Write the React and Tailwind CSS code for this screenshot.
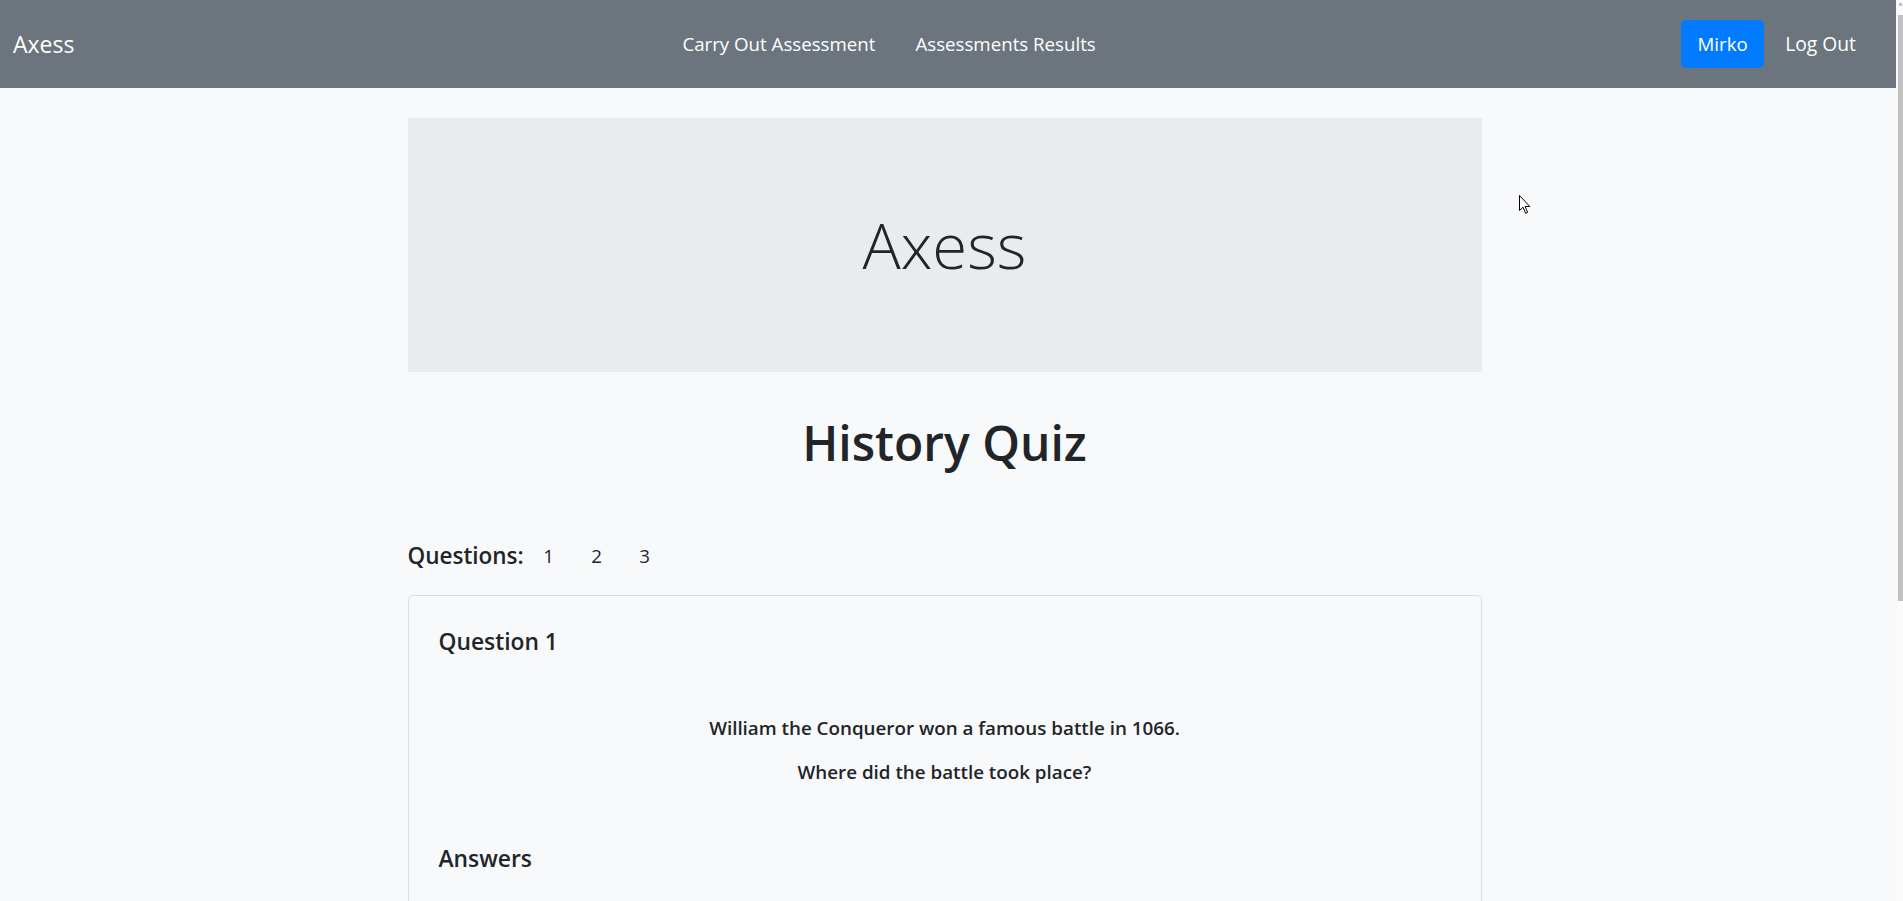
export default function App() {
  return (
    <div className="flex h-screen overflow-hidden bg-[#f8f9fa] font-['Open_Sans',sans-serif] text-[#212529]">
      <div className="relative min-w-0 flex-1">
        <nav className="flex h-[88px] items-center bg-[#6c757d] pl-[13px] pr-[40px] text-white">
          <a className="text-[23px] leading-none">Axess</a>
          <div className="ml-[608px] flex gap-[40px] text-[18.7px]">
            <a>Carry Out Assessment</a>
            <a>Assessments Results</a>
          </div>
          <div className="ml-auto flex items-center">
            <button className="flex h-[48px] w-[83px] items-center justify-center rounded-[5px] bg-[#007bff] text-[18.7px] text-white">
              Mirko
            </button>
            <a className="ml-[21px] text-[19.3px]">Log Out</a>
          </div>
        </nav>

        <div className="pr-[7px]">
          <main className="mx-auto w-[1074px] pt-[30px] pb-[40px]">
            <div className="flex h-[254px] items-center justify-center bg-[#e9ecef]">
              <h1 className="text-[63.5px] font-light leading-none">Axess</h1>
            </div>

            <h1 className="mt-[41px] h-[60px] text-center text-[48px] font-semibold leading-[60px]">
              History Quiz
            </h1>

            <div className="mt-[63px] flex h-[40px] items-center">
              <h5 className="w-[117px] text-[22.5px] font-semibold">Questions:</h5>
              <a className="w-[48px] text-center text-[18.7px]">1</a>
              <a className="w-[48px] text-center text-[18.7px]">2</a>
              <a className="w-[48px] text-center text-[18.7px]">3</a>
            </div>

            <div className="mt-[19px] h-[714px] rounded-[5px] border border-[#dcdee0] px-[30px] pt-[26px]">
              <h4 className="h-[40px] text-[22.8px] font-semibold leading-[40px]">Question 1</h4>
              <p className="mt-[51px] h-[31px] text-center text-[18.8px] font-semibold leading-[31px]">
                William the Conqueror won a famous battle in 1066.
              </p>
              <p className="mt-[13px] h-[31px] text-center text-[18.8px] font-semibold leading-[31px]">
                Where did the battle took place?
              </p>
              <h4 className="mt-[51px] h-[40px] text-[22.8px] font-semibold leading-[40px]">Answers</h4>
            </div>
          </main>
        </div>

        <svg
          className="pointer-events-none absolute left-[1519px] top-[195px]"
          width="13"
          height="20"
          viewBox="0 0 13 20"
        >
          <path
            d="M0.5 0.5 L0.5 15.5 L4 12.2 L6.6 18.3 L8.6 17.4 L6.1 11.5 L10.8 11.5 Z"
            fill="#ffffff"
            stroke="#000000"
            strokeWidth="1"
          />
        </svg>
      </div>

      <div className="flex w-[7px] shrink-0 flex-col items-end bg-[#fafafa]">
        <svg className="mt-[2px]" width="5" height="4" viewBox="0 0 5 4">
          <path d="M2.5 0.5 L4.5 3.5 L0.5 3.5 Z" fill="#a3a3a3" />
        </svg>
        <div className="mt-[9px] h-[586px] w-[5px] bg-[#c1c1c1]" />
      </div>
    </div>
  );
}
